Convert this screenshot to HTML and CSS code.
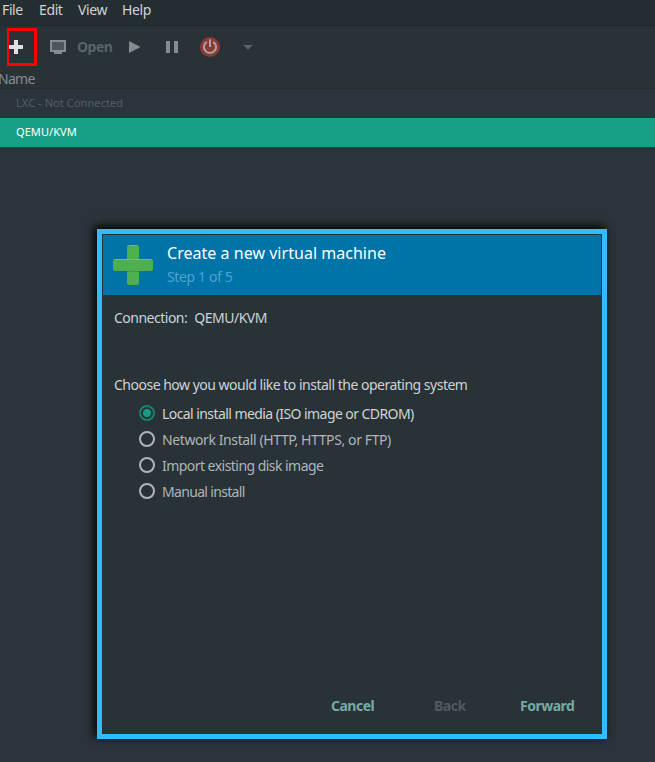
FILE: index.html
```html
<!DOCTYPE html>
<html lang="en">
<head>
<meta charset="utf-8">
<title>Virtual Machine Manager</title>
<link rel="stylesheet" href="styles.css">
</head>
<body>
<div class="manager">
  <nav class="menubar"><span>File</span><span>Edit</span><span>View</span><span>Help</span></nav>
  <div class="toolbar">
    <div class="new-vm"><svg width="14" height="14"><path d="M5 0h4v5h5v4H9v5H5V9H0V5h5z" fill="#dfe2e2"/></svg></div>
    <svg class="monitor" width="16" height="14"><path d="M0 0h16v12h-4v2H4v-2H0z" fill="#858b8e"/><path d="M2 2h12v8H2z" fill="#4c565b"/></svg>
    <span class="open">Open</span>
    <svg class="play" width="12" height="12"><path d="M0 0l11.5 6L0 12z" fill="#858b8e"/></svg>
    <svg class="pause" width="12" height="12"><path d="M0 0h4v12H0zM8 0h4v12H8z" fill="#858b8e"/></svg>
    <svg class="power" width="20" height="20"><circle cx="10" cy="10" r="10" fill="#8f3935"/><path d="M6.8 4.8a6.1 6.1 0 1 0 6.4 0" fill="none" stroke="#a0a5a7" stroke-width="2"/><path d="M10 2.2v7.8" stroke="#a0a5a7" stroke-width="2"/></svg>
    <svg class="arrow" width="10" height="5"><path d="M0 0h10L5 5z" fill="#596266"/></svg>
  </div>
  <div class="column-title">Name</div>
  <div class="row row-off"><span>LXC - Not Connected</span></div>
  <div class="row row-selected"><span>QEMU/KVM</span></div>
</div>
<section class="dialog">
  <header class="dialog-header">
    <svg class="plus" width="42" height="43"><g fill="#2f6b52"><rect x="15" y="2" width="12" height="40" rx="2"/><rect x="1" y="16" width="40" height="12" rx="2"/></g><g fill="#4caf50"><rect x="15" y="1" width="12" height="40" rx="2"/><rect x="1" y="15" width="40" height="12" rx="2"/></g><path d="M17 1.5h8M3 15.5h36" stroke="#70bf73"/><path d="M15 27.5h12" stroke="#43944e"/></svg>
    <div class="titles"><h1>Create a new virtual machine</h1><p>Step 1 of 5</p></div>
  </header>
  <div class="content">
    <div class="connection"><span>Connection:</span><span>QEMU/KVM</span></div>
    <div class="question">Choose how you would like to install the operating system</div>
    <div class="options">
      <div class="option chosen"><i class="radio"></i><span class="media">Local install media (ISO image or CDROM)</span></div>
      <div class="option"><i class="radio"></i><span class="network">Network Install (HTTP, HTTPS, or FTP)</span></div>
      <div class="option"><i class="radio"></i><span class="import">Import existing disk image</span></div>
      <div class="option"><i class="radio"></i><span class="manual">Manual install</span></div>
    </div>
  </div>
  <footer class="actions"><span>Cancel</span><span class="disabled">Back</span><span>Forward</span></footer>
</section>
</body>
</html>
```
FILE: styles.css
```css
* { box-sizing: border-box; }
body {
  margin: 0;
  height: 762px;
  overflow: hidden;
  background: #2a353b;
  font: 14px/20px "Noto Sans", sans-serif;
  letter-spacing: -0.5px;
  color: #cfd3d4;
  white-space: nowrap;
}
svg { display: block; flex: none; }
.menubar {
  display: grid;
  grid-template-columns: 37px 39px 44px 40px;
  height: 26px;
  padding-left: 2px;
  background: #242e32;
  border-bottom: 1px solid #1f292d;
  letter-spacing: -0.38px;
}
.toolbar {
  display: flex;
  align-items: center;
  height: 42px;
  padding-left: 6.5px;
  background: #283237;
}
.new-vm {
  display: flex;
  align-items: center;
  width: 30px;
  height: 38px;
  margin-bottom: 1px;
  padding-top: 1px;
  padding-left: 0.5px;
  border: 3px solid #f00;
  border-width: 3px 3px 3px 2px;
}
.monitor { margin-left: 13.5px; }
.open {
  width: 36px;
  margin-left: 11px;
  font-weight: 700;
  color: #596367;
}
.play { margin-left: 16px; }
.pause { margin-left: 25px; }
.power { margin-left: 22px; }
.arrow { margin-left: 23px; margin-top: 1px; }
.column-title {
  height: 21px;
  border-bottom: 1px solid #222c30;
  background: #283237;
  color: #858b8e;
  text-indent: -2px;
  letter-spacing: -0.7px;
  line-height: 22px;
}
.row {
  height: 29px;
  padding-left: 16px;
  font-size: 11px;
  letter-spacing: 0.08px;
  line-height: 28px;
}
.row-off { color: #535e63; }
.row-selected { background: #18a086; color: #fff; }

.dialog {
  position: absolute;
  left: 97px;
  top: 229px;
  display: flex;
  flex-direction: column;
  width: 510px;
  height: 510px;
  padding: 1px;
  border: 5px solid #33bbff;
  background: #283237;
  box-shadow: -3px -3px 8px #050708, 0 0 8px 1px rgba(0, 0, 0, 0.2);
}
.dialog-header {
  display: flex;
  height: 60px;
  padding: 9px 0 0 9px;
  background: #0073a8;
}
.titles { margin-left: 13px; }
h1 {
  margin: -1px 0 0;
  font-size: 16px;
  font-weight: 400;
  letter-spacing: 0.03px;
  line-height: 20px;
  color: #fff;
}
p { margin: 4px 0 0; color: #4da3d0; letter-spacing: -0.36px; }
.content { flex: 1; padding: 13px 0 0 11px; }
.connection { display: flex; gap: 7px; }
.question { margin-top: 47px; }
.options { margin: 6px 0 0 25px; }
.option {
  display: flex;
  align-items: center;
  gap: 7px;
  height: 26px;
  color: #afb5b8;
}
.radio {
  width: 16px;
  height: 16px;
  margin-bottom: 2px;
  border: 2px solid #b0b5b8;
  border-radius: 50%;
}
.media { letter-spacing: -0.57px; }
.network { letter-spacing: -0.4px; }
.import { letter-spacing: -0.54px; }
.manual { letter-spacing: -0.67px; }
.chosen { color: #d0d4d5; }
.chosen .radio {
  border-color: #1b7f6e;
  background: radial-gradient(circle, #189b82 3.6px, transparent 4.4px);
}
.actions {
  display: grid;
  grid-template-columns: 103px 86px 55px;
  justify-content: end;
  height: 37px;
  padding-right: 26px;
  font-weight: 700;
  letter-spacing: -0.5px;
  color: #76aaa6;
}
.disabled { color: #505a5f; }
```
